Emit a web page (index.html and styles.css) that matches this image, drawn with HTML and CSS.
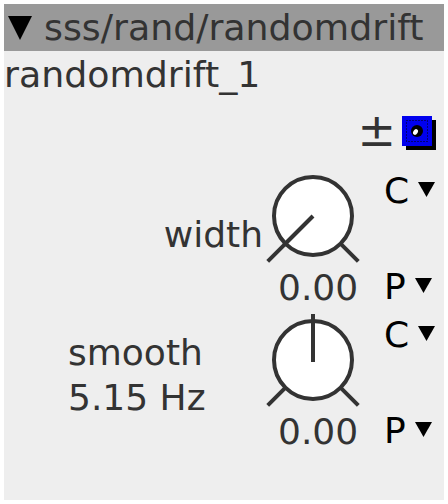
FILE: index.html
```html
<!DOCTYPE html>
<html>
<head>
<meta charset="utf-8">
<link rel="stylesheet" href="styles.css">
</head>
<body>
<div class="panel">
  <div class="header">
    <svg class="disc" width="24" height="24" viewBox="0 0 24 24"><polygon points="0,0 24,0 12,24" fill="#000"/></svg>
    <span class="title">sss/rand/randomdrift</span>
  </div>
  <div class="name">randomdrift_1</div>
  <div class="tools">
    <span class="pm">±</span>
    <span class="check">
      <svg width="30" height="30" viewBox="0 0 30 30">
        <rect x="4.5" y="4.5" width="21" height="21" fill="none" stroke="#000" stroke-width="1" stroke-dasharray="1 2"/>
        <circle cx="15" cy="15" r="6" fill="#000"/>
        <ellipse cx="13.5" cy="16" rx="2.2" ry="3" fill="#fff" transform="rotate(35 13.5 16)"/>
      </svg>
    </span>
  </div>
  <div class="param">
    <div class="label label-right">width</div>
    <div class="knob">
      <svg width="96" height="96" viewBox="0 0 96 96">
        <circle cx="48" cy="48" r="39" fill="#fff" stroke="#333" stroke-width="4"/>
        <line x1="19.7" y1="76.3" x2="2.7" y2="93.3" stroke="#333" stroke-width="4"/>
        <line x1="76.3" y1="76.3" x2="93.3" y2="93.3" stroke="#333" stroke-width="4"/>
        <line x1="48" y1="48" x2="19" y2="77" stroke="#333" stroke-width="4"/>
      </svg>
      <div class="value">0.00</div>
    </div>
    <div class="modes">
      <div class="mode mode-c">C<svg class="tri" width="17" height="15" viewBox="0 0 17 15"><polygon points="0,0 17,0 8.5,15" fill="#000"/></svg></div>
      <div class="mode mode-p">P<svg class="tri" width="17" height="15" viewBox="0 0 17 15"><polygon points="0,0 17,0 8.5,15" fill="#000"/></svg></div>
    </div>
  </div>
  <div class="param">
    <div class="label label-left">smooth<br>5.15 Hz</div>
    <div class="knob">
      <svg width="96" height="96" viewBox="0 0 96 96">
        <circle cx="48" cy="48" r="39" fill="#fff" stroke="#333" stroke-width="4"/>
        <line x1="19.7" y1="76.3" x2="2.7" y2="93.3" stroke="#333" stroke-width="4"/>
        <line x1="76.3" y1="76.3" x2="93.3" y2="93.3" stroke="#333" stroke-width="4"/>
        <line x1="48" y1="50" x2="48" y2="2" stroke="#333" stroke-width="4"/>
      </svg>
      <div class="value">0.00</div>
    </div>
    <div class="modes">
      <div class="mode mode-c">C<svg class="tri" width="17" height="15" viewBox="0 0 17 15"><polygon points="0,0 17,0 8.5,15" fill="#000"/></svg></div>
      <div class="mode mode-p">P<svg class="tri" width="17" height="15" viewBox="0 0 17 15"><polygon points="0,0 17,0 8.5,15" fill="#000"/></svg></div>
    </div>
  </div>
</div>
</body>
</html>
```

FILE: styles.css
```css
html, body {
  margin: 0;
  padding: 0;
  background: #fff;
}
body {
  padding: 4px;
  font-family: "DejaVu Sans", sans-serif;
  font-size: 36px;
  color: #333;
}
.panel {
  width: 440px;
  height: 496px;
  background: #eeeeee;
  overflow: hidden;
}
.header {
  height: 47px;
  background: #999999;
  display: flex;
  align-items: center;
  padding-left: 4px;
  line-height: 47px;
}
.disc {
  flex: none;
  margin-right: 12px;
}
.title {
  color: #333;
  font-size: 36.3px;
}
.name {
  height: 48px;
  line-height: 48px;
  font-size: 36.3px;
}
.tools {
  height: 61px;
  display: flex;
  justify-content: flex-end;
  align-items: center;
  padding-right: 12px;
}
.pm {
  font-size: 46px;
  line-height: 46px;
  color: #333;
  margin-right: 6px;
}
.check {
  width: 30px;
  height: 30px;
  background: #0000ee;
  box-shadow: 4px 4px 0 #000;
  display: block;
  margin-top: 2px;
}
.check svg {
  display: block;
}
.param {
  height: 144px;
  display: grid;
  grid-template-columns: 261px 96px 1fr;
}
.label {
  line-height: 45px;
}
.label-right {
  text-align: right;
  padding-right: 2px;
  padding-top: 52px;
}
.label-left {
  padding-left: 64px;
  padding-top: 26px;
}
.knob {
  padding-top: 8px;
}
.knob svg {
  display: block;
}
.value {
  line-height: 42px;
  margin-top: 3px;
  padding-left: 13px;
  white-space: nowrap;
}
.modes {
  padding-left: 23px;
}
.mode {
  line-height: 42px;
  color: #000;
  display: flex;
  align-items: flex-start;
  white-space: nowrap;
}
.mode-c {
  margin-top: 10px;
}
.mode-p {
  margin-top: 54px;
}
.tri {
  margin-left: 9px;
  margin-top: 12px;
}
```
